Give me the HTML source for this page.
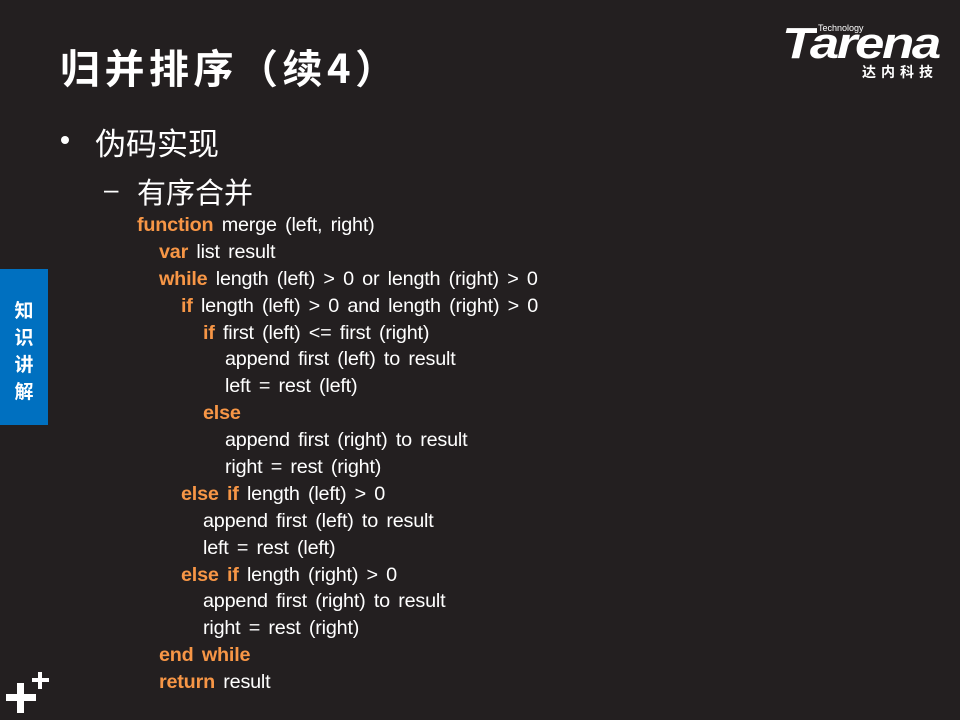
<!DOCTYPE html>
<html><head><meta charset="utf-8"><style>
body{margin:0;width:960px;height:720px;background:#231f20;overflow:hidden;position:relative;font-family:"Liberation Sans","Noto Sans CJK SC",sans-serif;color:#fff}
.t{position:absolute;left:60px;top:38px;font-size:40px;font-weight:bold;font-family:"Noto Sans CJK SC",sans-serif;line-height:56px;letter-spacing:4.5px}
.b{position:absolute;font-family:"Liberation Sans","Noto Sans CJK SC",sans-serif}
.code{position:absolute;left:137px;top:212px;font-size:19.8px;line-height:26.9px;letter-spacing:-0.2px;word-spacing:3px}
.code div{white-space:nowrap;height:26.9px}
.i1{padding-left:22px}.i2{padding-left:44px}.i3{padding-left:66px}.i4{padding-left:88px}
k{color:#f79646;font-weight:bold}
.side{position:absolute;left:0;top:269px;width:48px;height:156px;background:#0070c0;color:#fff;font-weight:bold;font-size:19px;font-family:"Noto Sans CJK SC",sans-serif;text-align:center;line-height:27px;padding-top:27px;box-sizing:border-box}
</style></head><body>
<div class="t">归并排序（续4）</div>
<div style="position:absolute;left:61px;top:136px;width:8px;height:8px;border-radius:50%;background:#fff"></div>
<div class="b" style="left:95px;top:119px;font-size:31px">伪码实现</div>
<div class="b" style="left:104px;top:174px;font-size:26px">–</div>
<div class="b" style="left:137px;top:170px;font-size:29px">有序合并</div>
<div class="code">
<div><k>function</k> merge (left, right)</div>
<div class="i1"><k>var</k> list result</div>
<div class="i1"><k>while</k> length (left) &gt; 0 or length (right) &gt; 0</div>
<div class="i2"><k>if</k> length (left) &gt; 0 and length (right) &gt; 0</div>
<div class="i3"><k>if</k> first (left) &lt;= first (right)</div>
<div class="i4">append first (left) to result</div>
<div class="i4">left = rest (left)</div>
<div class="i3"><k>else</k></div>
<div class="i4">append first (right) to result</div>
<div class="i4">right = rest (right)</div>
<div class="i2"><k>else if</k> length (left) &gt; 0</div>
<div class="i3">append first (left) to result</div>
<div class="i3">left = rest (left)</div>
<div class="i2"><k>else if</k> length (right) &gt; 0</div>
<div class="i3">append first (right) to result</div>
<div class="i3">right = rest (right)</div>
<div class="i1"><k>end while</k></div>
<div class="i1"><k>return</k> result</div>
</div>
<div class="side">知<br>识<br>讲<br>解</div>
<div style="position:absolute;left:782px;top:22px;font-size:44px;font-weight:bold;font-style:italic;letter-spacing:-2px;line-height:44px;transform:scaleX(1.2);transform-origin:left">Tarena</div>
<div style="position:absolute;left:817px;top:24px;font-size:9px;color:#fff;background:#231f20;padding:0 1px;line-height:9px">Technology</div>
<div style="position:absolute;left:862px;top:64px;font-size:14px;font-weight:bold;letter-spacing:5px;font-family:'Noto Sans CJK SC',sans-serif;line-height:16px">达内科技</div>
<svg style="position:absolute;left:0;top:660px" width="60" height="60"><g fill="#fff"><rect x="17" y="23" width="7" height="30"/><rect x="6" y="34" width="30" height="7"/><rect x="38" y="12" width="4" height="17"/><rect x="32" y="18" width="17" height="4"/></g></svg>
</body></html>
